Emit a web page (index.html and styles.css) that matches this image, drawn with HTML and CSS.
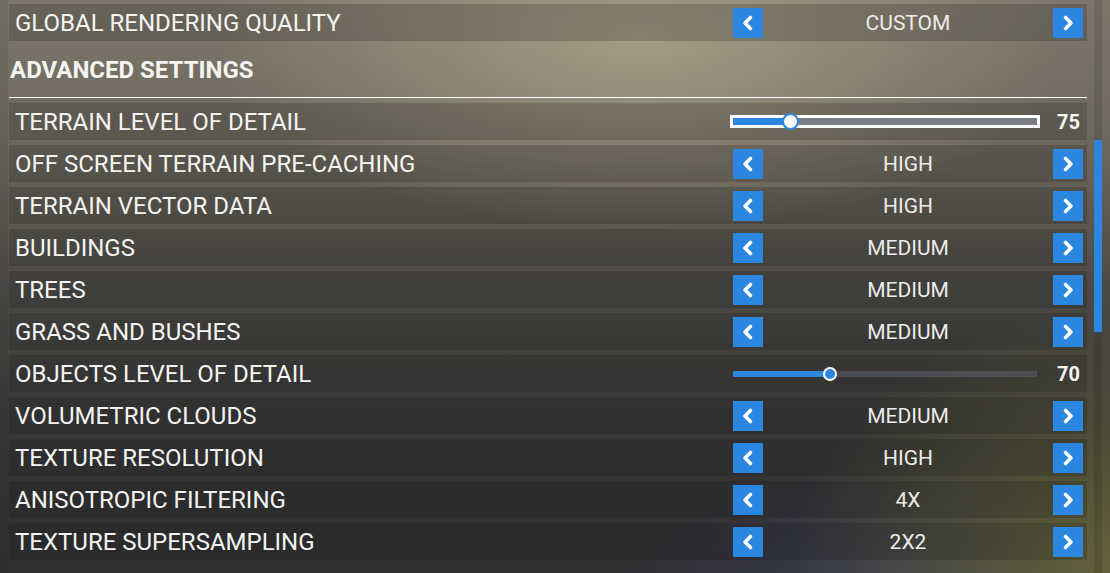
FILE: index.html
```html
<!DOCTYPE html>
<html lang="en">
<head>
  <meta charset="UTF-8">
  <title>Graphics settings</title>
  <link rel="stylesheet" href="styles.css">
</head>
<body>
  <div class="page">
    <div class="list">

      <div class="row top">
        <span class="label">GLOBAL RENDERING QUALITY</span>
        <div class="control">
          <button class="arrow"><svg viewBox="0 0 30 30"><polyline points="17.5,9.5 12,15 17.5,20.5"/></svg></button>
          <span class="value">CUSTOM</span>
          <button class="arrow"><svg viewBox="0 0 30 30"><polyline points="12.5,9.5 18,15 12.5,20.5"/></svg></button>
        </div>
      </div>

      <div class="section">ADVANCED SETTINGS</div>

      <div class="row">
        <span class="label">TERRAIN LEVEL OF DETAIL</span>
        <div class="control">
          <div class="slider focus">
            <div class="fill" style="width: 19%"><span class="knob"></span></div>
          </div>
          <span class="num">75</span>
        </div>
      </div>

      <div class="row">
        <span class="label">OFF SCREEN TERRAIN PRE-CACHING</span>
        <div class="control">
          <button class="arrow"><svg viewBox="0 0 30 30"><polyline points="17.5,9.5 12,15 17.5,20.5"/></svg></button>
          <span class="value">HIGH</span>
          <button class="arrow"><svg viewBox="0 0 30 30"><polyline points="12.5,9.5 18,15 12.5,20.5"/></svg></button>
        </div>
      </div>

      <div class="row">
        <span class="label">TERRAIN VECTOR DATA</span>
        <div class="control">
          <button class="arrow"><svg viewBox="0 0 30 30"><polyline points="17.5,9.5 12,15 17.5,20.5"/></svg></button>
          <span class="value">HIGH</span>
          <button class="arrow"><svg viewBox="0 0 30 30"><polyline points="12.5,9.5 18,15 12.5,20.5"/></svg></button>
        </div>
      </div>

      <div class="row">
        <span class="label">BUILDINGS</span>
        <div class="control">
          <button class="arrow"><svg viewBox="0 0 30 30"><polyline points="17.5,9.5 12,15 17.5,20.5"/></svg></button>
          <span class="value">MEDIUM</span>
          <button class="arrow"><svg viewBox="0 0 30 30"><polyline points="12.5,9.5 18,15 12.5,20.5"/></svg></button>
        </div>
      </div>

      <div class="row">
        <span class="label">TREES</span>
        <div class="control">
          <button class="arrow"><svg viewBox="0 0 30 30"><polyline points="17.5,9.5 12,15 17.5,20.5"/></svg></button>
          <span class="value">MEDIUM</span>
          <button class="arrow"><svg viewBox="0 0 30 30"><polyline points="12.5,9.5 18,15 12.5,20.5"/></svg></button>
        </div>
      </div>

      <div class="row">
        <span class="label">GRASS AND BUSHES</span>
        <div class="control">
          <button class="arrow"><svg viewBox="0 0 30 30"><polyline points="17.5,9.5 12,15 17.5,20.5"/></svg></button>
          <span class="value">MEDIUM</span>
          <button class="arrow"><svg viewBox="0 0 30 30"><polyline points="12.5,9.5 18,15 12.5,20.5"/></svg></button>
        </div>
      </div>

      <div class="row">
        <span class="label">OBJECTS LEVEL OF DETAIL</span>
        <div class="control">
          <div class="slider">
            <div class="fill" style="width: 32%"><span class="knob"></span></div>
          </div>
          <span class="num">70</span>
        </div>
      </div>

      <div class="row">
        <span class="label">VOLUMETRIC CLOUDS</span>
        <div class="control">
          <button class="arrow"><svg viewBox="0 0 30 30"><polyline points="17.5,9.5 12,15 17.5,20.5"/></svg></button>
          <span class="value">MEDIUM</span>
          <button class="arrow"><svg viewBox="0 0 30 30"><polyline points="12.5,9.5 18,15 12.5,20.5"/></svg></button>
        </div>
      </div>

      <div class="row">
        <span class="label">TEXTURE RESOLUTION</span>
        <div class="control">
          <button class="arrow"><svg viewBox="0 0 30 30"><polyline points="17.5,9.5 12,15 17.5,20.5"/></svg></button>
          <span class="value">HIGH</span>
          <button class="arrow"><svg viewBox="0 0 30 30"><polyline points="12.5,9.5 18,15 12.5,20.5"/></svg></button>
        </div>
      </div>

      <div class="row">
        <span class="label">ANISOTROPIC FILTERING</span>
        <div class="control">
          <button class="arrow"><svg viewBox="0 0 30 30"><polyline points="17.5,9.5 12,15 17.5,20.5"/></svg></button>
          <span class="value">4X</span>
          <button class="arrow"><svg viewBox="0 0 30 30"><polyline points="12.5,9.5 18,15 12.5,20.5"/></svg></button>
        </div>
      </div>

      <div class="row">
        <span class="label">TEXTURE SUPERSAMPLING</span>
        <div class="control">
          <button class="arrow"><svg viewBox="0 0 30 30"><polyline points="17.5,9.5 12,15 17.5,20.5"/></svg></button>
          <span class="value">2X2</span>
          <button class="arrow"><svg viewBox="0 0 30 30"><polyline points="12.5,9.5 18,15 12.5,20.5"/></svg></button>
        </div>
      </div>

    </div>

    <div class="scroll"><div class="thumb"></div></div>
  </div>
</body>
</html>
```

FILE: styles.css
```css
html, body { margin: 0; height: 100%; }
body {
  font-family: Roboto, "Liberation Sans", sans-serif;
  color: #f4f4f2;
  overflow: hidden;
  background:
    radial-gradient(ellipse 430px 190px at 640px 40px, rgba(172, 162, 138, 0.85), rgba(172, 162, 138, 0)),
    radial-gradient(ellipse 330px 260px at 1120px 570px, rgba(110, 108, 58, 0.85), rgba(110, 108, 58, 0)),
    radial-gradient(ellipse 280px 140px at 900px 600px, rgba(62, 66, 96, 0.7), rgba(62, 66, 96, 0)),
    linear-gradient(180deg, #7d776a 0%, #6d685d 25%, #4c4a45 50%, #363636 75%, #2f2f32 100%);
}

.page { display: flex; height: 100%; border-left: 8px solid rgba(40, 40, 40, 0.12); box-sizing: border-box; }
.list { width: 1078px; margin-left: 1px; padding-top: 4px; }

.row {
  height: 37px;
  margin-bottom: 5px;
  display: flex;
  align-items: center;
  background: rgba(20, 20, 20, 0.2);
  padding-right: 4px;
}
.row.top { margin-bottom: 0; }
.label { flex: 1; padding-left: 6px; font-size: 24px; }

.section {
  height: 57px;
  padding: 2px 0 0 1px;
  box-sizing: border-box;
  border-bottom: 1px solid #fff;
  margin-bottom: 5px;
  display: flex;
  align-items: center;
  font-size: 24px;
  font-weight: bold;
}

.control { width: 350px; display: flex; align-items: center; }
.value { flex: 1; text-align: center; font-size: 21px; color: #ececea; }
.arrow {
  width: 30px; height: 30px;
  padding: 0; border: none;
  background: #2b86e0;
  display: block;
}
.arrow svg { display: block; width: 30px; height: 30px; fill: none; stroke: #fff; stroke-width: 3.6; stroke-linecap: round; stroke-linejoin: round; }

.slider { width: 304px; height: 6px; background: rgba(90, 95, 108, 0.55); position: relative; }
.slider.focus { background: #7c7e86; outline: 3px solid #fff; height: 7px; }
.fill { height: 100%; background: #2b86e0; position: relative; }
.knob {
  position: absolute; right: -7px; top: 50%;
  width: 10px; height: 10px; margin-top: -7px;
  border-radius: 50%; background: #2b86e0; border: 2px solid #fff;
}
.focus .knob { width: 13px; height: 13px; margin-top: -8.5px; right: -8.5px; background: #fff; border-color: #2b86e0; }
.num { flex: 1; text-align: right; padding-right: 3px; font-size: 20px; font-weight: bold; }

.scroll { width: 8px; margin-left: 7px; background: rgba(30, 30, 30, 0.15); }
.thumb { margin-top: 140px; height: 192px; background: #2b86e0; }
```
